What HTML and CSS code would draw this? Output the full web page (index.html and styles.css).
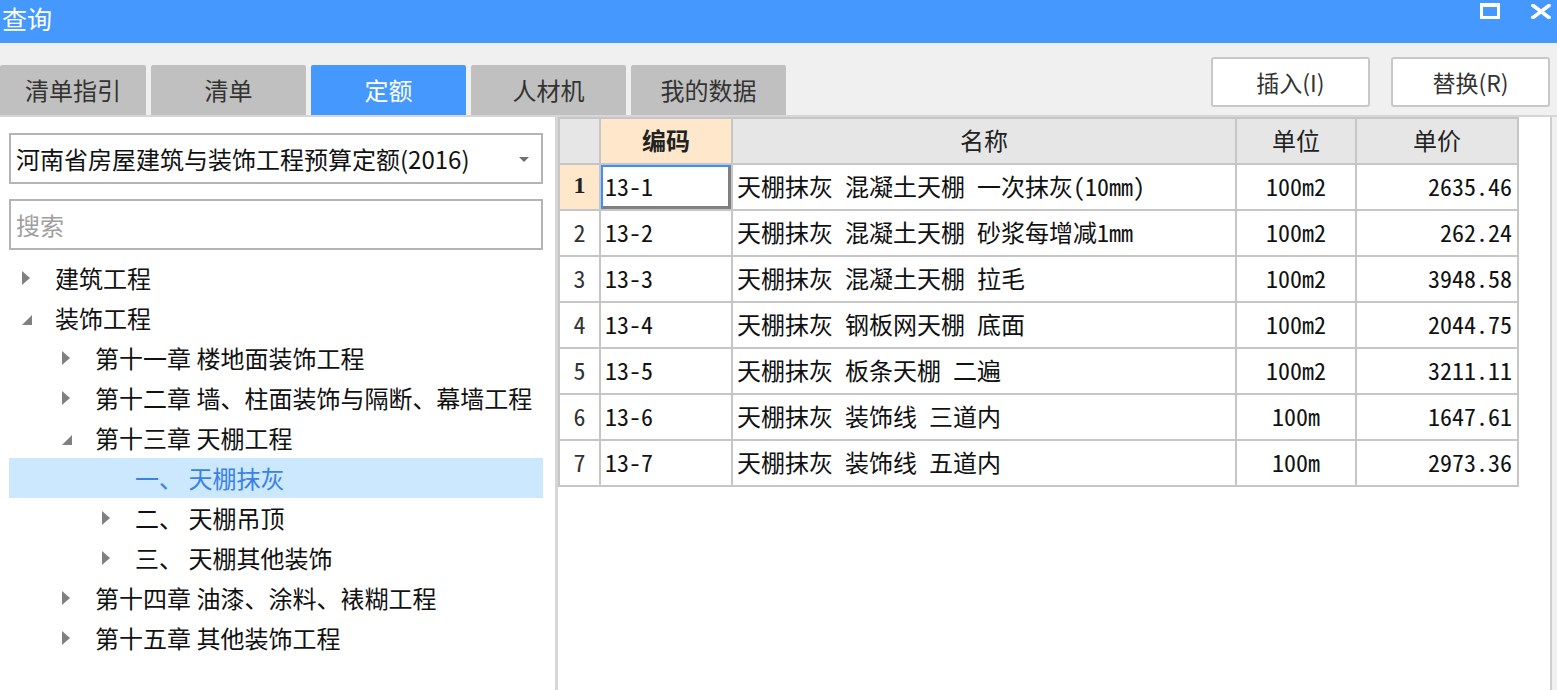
FILE: index.html
```html
<!DOCTYPE html>
<html lang="zh-CN">
<head>
<meta charset="utf-8">
<title>查询</title>
<link rel="stylesheet" href="styles.css">
</head>
<body>
<div class="window">
  <div class="titlebar">
    <span class="title">查询</span>
    <div class="winbtns">
      <span class="maxbtn"></span>
      <svg class="closebtn" width="20" height="15" viewBox="0 0 20 15"><path d="M2 1.5 L18 13.5 M18 1.5 L2 13.5" stroke="#fff" stroke-width="3.6" stroke-linecap="square"/></svg>
    </div>
  </div>
  <div class="toolbar">
    <div class="tabs">
      <div class="tab tab-first">清单指引</div>
      <div class="tab">清单</div>
      <div class="tab active">定额</div>
      <div class="tab">人材机</div>
      <div class="tab">我的数据</div>
    </div>
    <div class="actions">
      <button class="btn">插入(I)</button>
      <button class="btn">替换(R)</button>
    </div>
  </div>
  <div class="content">
    <div class="left">
      <div class="select">
        <span>河南省房屋建筑与装饰工程预算定额(2016)</span>
        <span class="caret"></span>
      </div>
      <div class="search">搜索</div>
      <ul class="tree">
        <li class="node l0"><span class="arr closed"></span><span>建筑工程</span></li>
        <li class="node l0"><span class="arr open"></span><span>装饰工程</span></li>
        <li class="node l1"><span class="arr closed"></span><span>第十一章 楼地面装饰工程</span></li>
        <li class="node l1"><span class="arr closed"></span><span>第十二章 墙、柱面装饰与隔断、幕墙工程</span></li>
        <li class="node l1"><span class="arr open"></span><span>第十三章 天棚工程</span></li>
        <li class="node l2 selected"><span class="arr"></span><span>一、 天棚抹灰</span></li>
        <li class="node l2"><span class="arr closed"></span><span>二、 天棚吊顶</span></li>
        <li class="node l2"><span class="arr closed"></span><span>三、 天棚其他装饰</span></li>
        <li class="node l1"><span class="arr closed"></span><span>第十四章 油漆、涂料、裱糊工程</span></li>
        <li class="node l1"><span class="arr closed"></span><span>第十五章 其他装饰工程</span></li>
      </ul>
    </div>
    <div class="right">
      <div class="gridwrap">
        <table class="grid">
          <colgroup>
            <col class="c-no"><col class="c-code"><col class="c-name"><col class="c-unit"><col class="c-price">
          </colgroup>
          <thead>
            <tr><th></th><th class="hl">编码</th><th>名称</th><th>单位</th><th>单价</th></tr>
          </thead>
          <tbody>
            <tr><td class="no cur">1</td><td class="code focus">13-1</td><td class="name">天棚抹灰 混凝土天棚 一次抹灰(10mm)</td><td class="unit">100m2</td><td class="price">2635.46</td></tr>
            <tr><td class="no">2</td><td class="code">13-2</td><td class="name">天棚抹灰 混凝土天棚 砂浆每增减1mm</td><td class="unit">100m2</td><td class="price">262.24</td></tr>
            <tr><td class="no">3</td><td class="code">13-3</td><td class="name">天棚抹灰 混凝土天棚 拉毛</td><td class="unit">100m2</td><td class="price">3948.58</td></tr>
            <tr><td class="no">4</td><td class="code">13-4</td><td class="name">天棚抹灰 钢板网天棚 底面</td><td class="unit">100m2</td><td class="price">2044.75</td></tr>
            <tr><td class="no">5</td><td class="code">13-5</td><td class="name">天棚抹灰 板条天棚 二遍</td><td class="unit">100m2</td><td class="price">3211.11</td></tr>
            <tr><td class="no">6</td><td class="code">13-6</td><td class="name">天棚抹灰 装饰线 三道内</td><td class="unit">100m</td><td class="price">1647.61</td></tr>
            <tr><td class="no">7</td><td class="code">13-7</td><td class="name">天棚抹灰 装饰线 五道内</td><td class="unit">100m</td><td class="price">2973.36</td></tr>
          </tbody>
        </table>
      </div>
    </div>
  </div>
</div>
</body>
</html>
```

FILE: styles.css
```css
html, body {
  margin: 0;
  padding: 0;
}
body {
  width: 1557px;
  height: 690px;
  overflow: hidden;
  background: #f0f0f0;
  font-family: "Noto Sans CJK SC", "Microsoft YaHei", sans-serif;
  color: #111;
}
.window {
  display: flex;
  flex-direction: column;
  height: 690px;
}
.titlebar {
  height: 43px;
  background: #4599fe;
  display: flex;
  justify-content: space-between;
  align-items: flex-start;
  flex: none;
}
.title {
  color: #fff;
  font-size: 25px;
  line-height: 37px;
  margin-left: 2px;
}
.winbtns {
  display: flex;
  align-items: flex-start;
  gap: 31px;
  padding-top: 3px;
  margin-right: 6px;
}
.maxbtn {
  display: block;
  width: 14px;
  height: 9px;
  border: 3px solid #fff;
  border-top-width: 4px;
}
.closebtn {
  display: block;
  margin-top: 1px;
}
.toolbar {
  height: 72px;
  display: flex;
  justify-content: space-between;
  flex: none;
}
.tabs {
  display: flex;
  align-items: flex-end;
  gap: 5px;
}
.tab {
  width: 155px;
  height: 50px;
  background: #c0c0c0;
  color: #333;
  font-size: 24px;
  line-height: 50px;
  text-align: center;
  border-radius: 2px 2px 0 0;
}
.tab-first {
  width: 146px;
}
.tab.active {
  background: #4599fe;
  color: #fff;
}
.actions {
  display: flex;
  gap: 21px;
  padding-top: 14px;
  margin-right: 7px;
  align-items: flex-start;
}
.btn {
  width: 159px;
  height: 50px;
  background: #fff;
  border: 2px solid #c8c8c8;
  border-radius: 3px;
  font-family: "Noto Sans CJK SC", sans-serif;
  font-size: 23px;
  color: #333;
  padding: 0;
}
.content {
  flex: 1;
  display: flex;
  border-top: 2px solid #d6d6d6;
  min-height: 0;
}
.left {
  width: 555px;
  flex: none;
  background: #fff;
  padding: 16px 12px 0 9px;
  box-sizing: border-box;
}
.select, .search {
  height: 51px;
  border: 2px solid #b4b4b4;
  box-sizing: border-box;
  display: flex;
  align-items: center;
  justify-content: space-between;
  padding: 0 12px 0 5px;
  font-size: 24px;
}
.select {
  color: #111;
}
.caret {
  width: 0;
  height: 0;
  border-left: 5px solid transparent;
  border-right: 5px solid transparent;
  border-top: 5px solid #707070;
  margin-top: 2px;
}
.search {
  margin-top: 15px;
  color: #a0a0a0;
}
.tree {
  list-style: none;
  margin: 8px 0 0;
  padding: 0;
}
.node {
  height: 40px;
  display: flex;
  align-items: center;
  font-size: 24px;
  line-height: 40px;
  color: #111;
}
.node.l0 { padding-left: 13px; }
.node.l1 { padding-left: 53px; }
.node.l2 { padding-left: 93px; }
.node.selected {
  background: #cce8ff;
  color: #3a82e4;
}
.arr {
  width: 33px;
  flex: none;
  display: flex;
  align-items: center;
  height: 40px;
}
.arr.closed::before {
  content: "";
  display: block;
  width: 0;
  height: 0;
  border-left: 8px solid #808080;
  border-top: 7px solid transparent;
  border-bottom: 7px solid transparent;
}
.arr.open::before {
  content: "";
  display: block;
  width: 0;
  height: 0;
  border-bottom: 10px solid #808080;
  border-left: 10px solid transparent;
  margin-top: 4px;
}
.right {
  flex: 1;
  display: flex;
  border-left: 3px solid #d6d6d6;
  background: #f0f0f0;
}
.gridwrap {
  width: 992px;
  background: #fff;
  border-right: 2px solid #cfcfcf;
}
.grid {
  border-collapse: collapse;
  table-layout: fixed;
  width: 959px;
  font-family: "Noto Sans Mono CJK SC", "Noto Sans CJK SC", "Liberation Mono", monospace;
  font-size: 24px;
  color: #111;
}
.c-no { width: 41px; }
.c-code { width: 132px; }
.c-name { width: 504px; }
.c-unit { width: 120px; }
.c-price { width: 162px; }
.grid th, .grid td {
  border: 2px solid #c6c6c6;
  height: 41px;
  padding: 0 4px 3px;
  white-space: nowrap;
  overflow: hidden;
}
.grid th {
  background: #e6e6e6;
  font-weight: normal;
  font-family: "Noto Sans CJK SC", sans-serif;
  text-align: center;
  color: #222;
}
.grid th.hl {
  background: #ffe7cc;
  font-weight: bold;
}
.grid td.no {
  text-align: center;
  color: #333;
  padding: 0 0 3px;
}
.grid td.no.cur {
  background: #ffe7cc;
  font-weight: bold;
  font-family: "Liberation Serif", serif;
  color: #222;
}
.grid td.focus {
  box-shadow: inset 2px 2px 0 #3b90f5, inset -3px -3px 0 #808080;
}
.grid td.unit {
  text-align: center;
}
.grid td.price {
  text-align: right;
  padding-right: 5px;
}
```
